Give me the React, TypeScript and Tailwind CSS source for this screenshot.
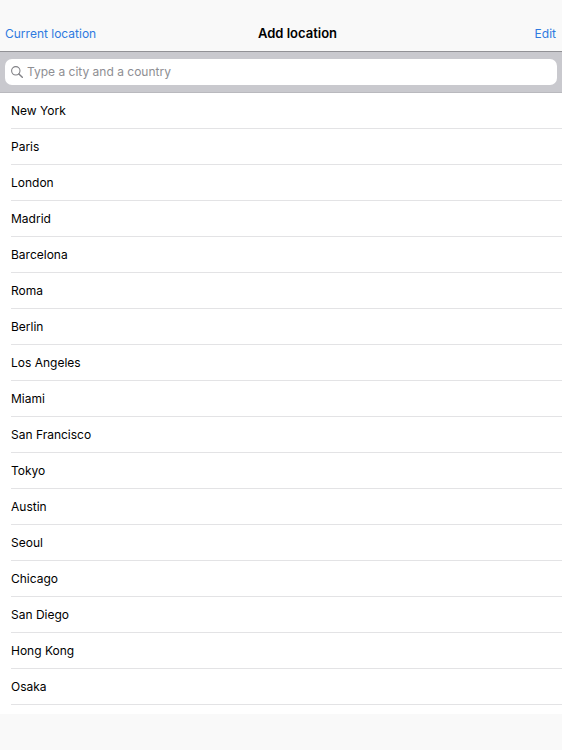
const CITIES = [
  'New York',
  'Paris',
  'London',
  'Madrid',
  'Barcelona',
  'Roma',
  'Berlin',
  'Los Angeles',
  'Miami',
  'San Francisco',
  'Tokyo',
  'Austin',
  'Seoul',
  'Chicago',
  'San Diego',
  'Hong Kong',
  'Osaka',
]

function SearchIcon() {
  return (
    <svg
      viewBox="0 0 12 12"
      className="h-3 w-3 shrink-0 text-[#808085]"
      fill="none"
      stroke="currentColor"
      strokeLinecap="round"
      aria-hidden="true"
    >
      <circle cx="4.8" cy="4.8" r="4.2" strokeWidth="1.1" />
      <path d="M7.9 7.9l3.4 3.4" strokeWidth="1.4" />
    </svg>
  )
}

export default function App() {
  return (
    <div className="flex min-h-screen flex-col bg-white font-['Inter',sans-serif] text-[12px] leading-4 text-black">
      {/* Navigation bar */}
      <header className="grid h-[52px] grid-cols-[1fr_auto_1fr] items-end border-b border-[#919195] bg-[#f9f9f9] pr-1.5 pb-[9px] pl-[5px]">
        <button type="button" className="justify-self-start text-[#2f7ae0]">
          Current location
        </button>
        <h1 className="pl-[34px] text-[13px] leading-[18px] font-semibold">Add location</h1>
        <button type="button" className="justify-self-end text-[#2f7ae0]">
          Edit
        </button>
      </header>

      {/* Search */}
      <div className="border-b border-[#b9b9be] bg-[#c9c9ce] px-[5px] py-[7px]">
        <label className="flex h-[26px] items-center gap-1 rounded-[7px] bg-white px-1.5">
          <SearchIcon />
          <input
            type="search"
            aria-label="Search for a location"
            placeholder="Type a city and a country"
            className="min-w-0 flex-1 bg-transparent outline-none placeholder:text-[#8e8e93]"
          />
        </label>
      </div>

      {/* Saved locations */}
      <main className="flex-1 pl-[11px]">
        <ul>
          {CITIES.map((city) => (
            <li key={city} className="flex h-9 items-center border-b border-[#e3e3e5]">
              {city}
            </li>
          ))}
        </ul>
      </main>

      <footer className="h-9 bg-[#f9f9f9]" />
    </div>
  )
}
